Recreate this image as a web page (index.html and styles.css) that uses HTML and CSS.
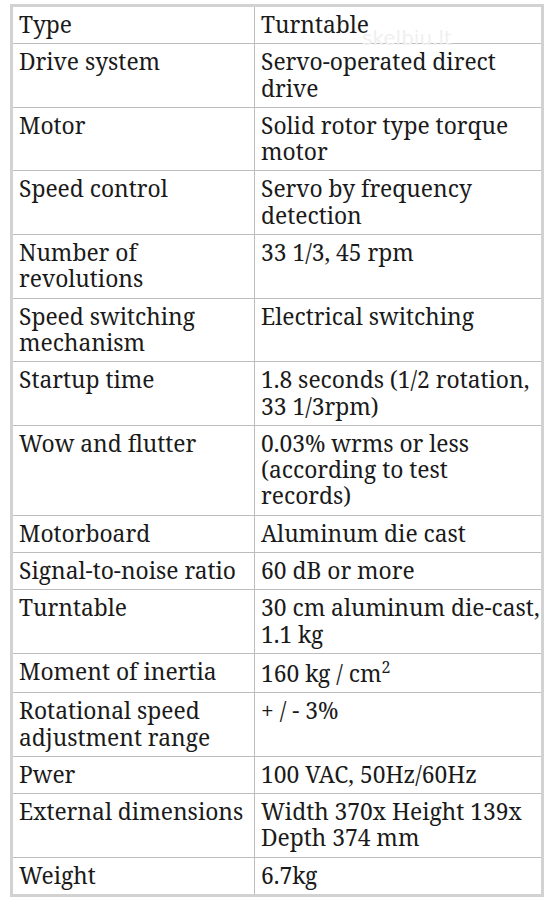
FILE: index.html
```html
<!DOCTYPE html>
<html>
<head>
<meta charset="utf-8">
<link rel="stylesheet" href="styles.css">
</head>
<body>
<div class="wrap">
<table class="spec">
<tr><td class="k">Type</td><td>Turntable</td></tr>
<tr><td class="k">Drive system</td><td>Servo-operated direct drive</td></tr>
<tr><td class="k">Motor</td><td>Solid rotor type torque motor</td></tr>
<tr><td class="k">Speed control</td><td>Servo by frequency detection</td></tr>
<tr><td class="k">Number of revolutions</td><td>33 1/3, 45 rpm</td></tr>
<tr><td class="k">Speed switching mechanism</td><td>Electrical switching</td></tr>
<tr><td class="k">Startup time</td><td>1.8 seconds (1/2 rotation, 33 1/3rpm)</td></tr>
<tr><td class="k">Wow and flutter</td><td>0.03% wrms or less (according to test records)</td></tr>
<tr><td class="k">Motorboard</td><td>Aluminum die cast</td></tr>
<tr><td class="k">Signal-to-noise ratio</td><td>60 dB or more</td></tr>
<tr><td class="k">Turntable</td><td>30 cm aluminum die-cast, 1.1 kg</td></tr>
<tr><td class="k">Moment of inertia</td><td>160 kg / cm<sup>2</sup></td></tr>
<tr><td class="k">Rotational speed adjustment range</td><td>+ / - 3%</td></tr>
<tr><td class="k">Pwer</td><td>100 VAC, 50Hz/60Hz</td></tr>
<tr><td class="k">External dimensions</td><td>Width 370x Height 139x Depth 374 mm</td></tr>
<tr><td class="k">Weight</td><td>6.7kg</td></tr>
</table>
<div class="mark">skelbiu.lt</div>
</div>
</body>
</html>
```
FILE: styles.css
```css
html, body {
  margin: 0;
  padding: 0;
  background: #ffffff;
}
.wrap {
  position: relative;
  padding: 4px 0 0 10px;
}
.spec {
  width: 534px;
  border-collapse: collapse;
  border: 3px solid #d2d2d2;
  font-family: "Noto Serif", "DejaVu Serif", serif;
  font-size: 22.8px;
  line-height: 26.3px;
  color: #1a1a1a;
  table-layout: fixed;
}
.spec td {
  border: 1px solid #bdbdbd;
  padding: 5px 1px 5px 6px;
  vertical-align: top;
}
.spec td.k {
  width: 234px;
}
.spec sup {
  font-size: 16px;
  line-height: 16px;
  vertical-align: 9px;
}
.mark {
  position: absolute;
  left: 362px;
  top: 28px;
  font-family: "DejaVu Sans", sans-serif;
  font-size: 20px;
  line-height: 20px;
  color: #f0f0f0;
  pointer-events: none;
}
```
